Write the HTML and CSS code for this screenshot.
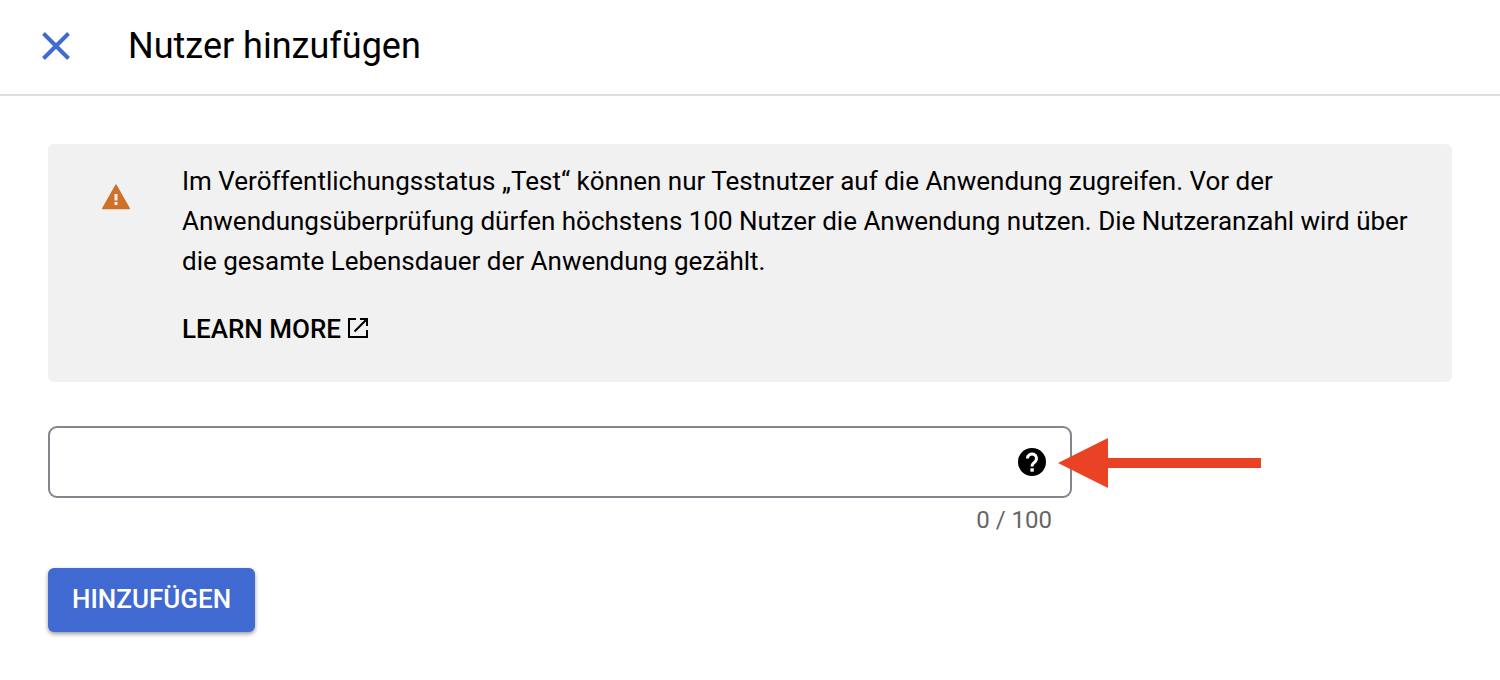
FILE: index.html
```html
<!DOCTYPE html>
<html lang="de">
<head>
<meta charset="utf-8">
<meta name="viewport" content="width=device-width, initial-scale=1">
<title>Nutzer hinzufügen</title>
<link rel="stylesheet" href="styles.css">
</head>
<body>
<header class="header">
  <button class="close" type="button" aria-label="Schließen">
    <svg viewBox="0 0 28 28" width="28" height="28" aria-hidden="true"><path d="M1.500 1.500l25 25M26.500 1.500l-25 25" stroke="currentColor" stroke-width="4" fill="none"/></svg>
  </button>
  <h1 class="title">Nutzer hinzufügen</h1>
</header>
<main class="content">
  <section class="notice">
    <svg class="warning" viewBox="0 0 28 26" width="28" height="26" aria-hidden="true"><path d="M14 1L27.300 24.500H.7z" fill="#cf7128" stroke="#cf7128" stroke-width="1.400" stroke-linejoin="round"/><path d="M12.500 10h3v6.500h-3zM12.500 18h3v3h-3z" fill="#f1f1f1"/></svg>
    <div class="notice-body">
      <p class="notice-text">Im Veröffentlichungsstatus „Test“ können nur Testnutzer auf die Anwendung zugreifen. Vor der Anwendungsüberprüfung dürfen höchstens 100 Nutzer die Anwendung nutzen. Die Nutzeranzahl wird über die gesamte Lebensdauer der Anwendung gezählt.</p>
      <a class="learn" href="#">LEARN MORE
        <svg class="external" viewBox="0 0 20 20" width="20" height="20" aria-hidden="true"><path d="M8 1H1v18h18v-7M12 1h7v7M19 1L6.500 13.500" stroke="currentColor" stroke-width="2" fill="none"/></svg></a>
    </div>
  </section>
  <form class="form">
    <div class="field">
      <input class="input" type="text" aria-label="Nutzer">
      <svg class="help" viewBox="0 0 28 28" width="28" height="28" aria-hidden="true"><circle cx="14" cy="14" r="14"/><path d="M9.500 10.500a4.500 4.500 0 1 1 7.700 3.100C15.500 15.300 14 15.700 14 18.500" stroke="#fff" stroke-width="3" fill="none"/><path d="M12.400 20.300h3.400v3.400h-3.400z" fill="#fff"/></svg>
      <svg class="arrow" viewBox="0 0 203 50" width="203" height="50" aria-hidden="true"><path d="M0 25L50 0v20h153v10H50v20z" fill="#e94224"/></svg>
    </div>
    <div class="counter">0 / 100</div>
    <button class="submit" type="button">HINZUFÜGEN</button>
  </form>
</main>
</body>
</html>
```
FILE: styles.css
```css
* { box-sizing: border-box; }
body { margin: 0; background: #fff; color: #000; font-family: Roboto, sans-serif; font-size: 26px; }
.header { display: flex; align-items: center; gap: 58px; height: 96px; padding: 0 42px 2px; border-bottom: 2px solid #dedede; }
.close { display: flex; padding: 0; border: 0; background: none; color: #4169d2; }
.title { margin: 0; font-size: 36px; line-height: 44px; font-weight: 400; }
.content { padding: 48px; }
.notice { display: flex; align-items: flex-start; gap: 52px; padding: 17px 40px 33px 54px; border-radius: 6px; background: #f1f1f1; }
.warning { flex: none; margin-top: 23px; }
.notice-text { margin: 0 0 28px; line-height: 40px; }
.learn { display: inline-flex; align-items: center; gap: 7px; color: #000; font-weight: 500; line-height: 40px; text-decoration: none; }
.external { margin-bottom: 2px; }
.form { display: flex; flex-direction: column; align-items: flex-start; margin-top: 44px; }
.field { position: relative; width: 100%; max-width: 1024px; }
.input { display: block; width: 100%; height: 72px; padding: 0 72px 0 24px; border: 2px solid #80868b; border-radius: 9px; background: #fff; font: inherit; }
.help { position: absolute; right: 26px; top: 22px; }
.arrow { position: absolute; left: calc(100% - 14px); top: 12px; }
.counter { width: 100%; max-width: 1024px; padding: 6px 20px 0 0; color: #666; font-size: 24px; line-height: 32px; text-align: right; }
.submit { height: 64px; margin-top: 32px; padding: 0 24px 2px; border: 0; border-radius: 6px; background: #4169d2; color: #fff; font: 500 26px/32px Roboto, sans-serif; box-shadow: 0 2px 4px rgba(0, 0, 0, .4); }
```
